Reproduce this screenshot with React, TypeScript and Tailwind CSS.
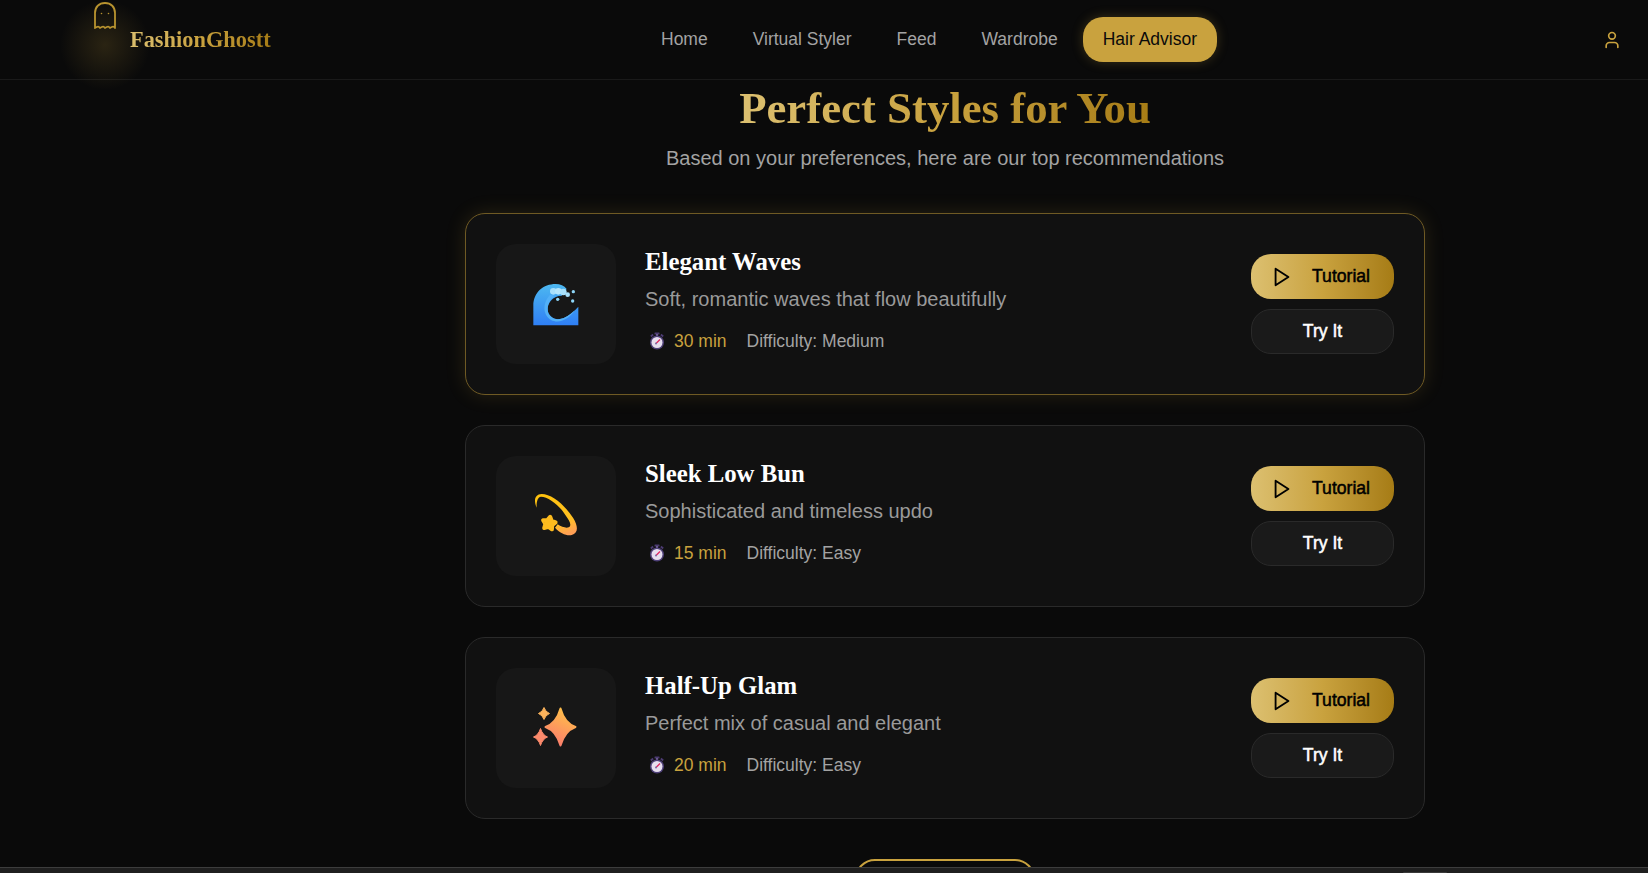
import React from "react";
import { User } from "lucide-react";

const serif = "font-['Liberation_Serif',serif]";

function Ghost() {
  return (
    <svg width="24" height="30" viewBox="0 0 24 30" fill="none" stroke="#b8932f" strokeWidth="1.8" strokeLinejoin="round" strokeLinecap="round">
      <path d="M2 27V12C2 6 6 2 12 2s10 4 10 10v15q-1.200-1.800-2.500-1.200T17 27q-1.300-1.800-2.500-1.200T12 27q-1.300-1.800-2.500-1.200T7 27q-1.300-1.800-2.500-1.200T2 27z" />
      <circle cx="8.500" cy="12.500" r="0.800" fill="#b8932f" stroke="none" />
      <circle cx="15.500" cy="12.500" r="0.800" fill="#b8932f" stroke="none" />
    </svg>
  );
}

function Wave() {
  return (
    <svg width="60" height="60" viewBox="3 0 180 180">
      <defs>
        <linearGradient id="wv" x1="0" y1="0" x2="0" y2="1">
          <stop offset="0" stopColor="#4db8f0" />
          <stop offset="1" stopColor="#2f7ff5" />
        </linearGradient>
      </defs>
      <path d="M25 154V95C25 55 55 30 92 30c13 0 26 5 33 15l-15 20c-25 0-42 20-42 40s17 33 37 30c20-3 40-20 55-37v56z" fill="url(#wv)" />
      <path d="M75 62C55 85 50 118 78 138c28 14 58-8 72-30-15 14-30 25-45 27-20 3-37-10-37-30 0-15 8-30 22-40z" fill="#52b0f7" />
      <circle cx="85" cy="52" r="10" fill="#a8e0fb" />
      <circle cx="100" cy="52" r="10" fill="#b5e6fc" />
      <circle cx="115" cy="54" r="10" fill="#a8e0fb" />
      <circle cx="128" cy="62" r="7" fill="#a8e0fb" />
      <circle cx="145" cy="53" r="5" fill="#8ed6f8" />
      <circle cx="143" cy="81" r="5" fill="#8ed6f8" />
      <circle cx="98" cy="76" r="5" fill="#8ed6f8" />
    </svg>
  );
}

function Dizzy() {
  return (
    <svg width="60" height="60" viewBox="3 3 180 180">
      <defs>
        <linearGradient id="dz" x1="0.300" y1="0" x2="0.700" y2="1">
          <stop offset="0" stopColor="#ffc20e" />
          <stop offset="0.700" stopColor="#ffc022" />
          <stop offset="1" stopColor="#ff9f55" />
        </linearGradient>
      </defs>
      <path d="M35 68C25 45 30 28 50 27c30 0 70 33 95 73 15 25 15 45-5 50-15 3-35-5-50-22l8-10c12 8 25 12 33 9 10-5 4-18-10-37C105 62 70 35 48 35c-10 1-14 15-13 33z" fill="url(#dz)" />
      <polygon points="75.500,95.300 79.900,107.400 91.800,112.200 81.700,120.200 80.800,133 70.100,125.800 57.600,128.900 61.100,116.500 54.300,105.600 67.200,105.100" fill="#fdbb1e" stroke="#fdbb1e" strokeWidth="12" strokeLinejoin="round" />
    </svg>
  );
}

function star(cx: number, cy: number, w: number, h: number, k: number) {
  return `M${cx} ${cy - h}Q${cx + k} ${cy - k} ${cx + w} ${cy}Q${cx + k} ${cy + k} ${cx} ${cy + h}Q${cx - k} ${cy + k} ${cx - w} ${cy}Q${cx - k} ${cy - k} ${cx} ${cy - h}z`;
}

function Sparkle() {
  return (
    <svg width="46" height="46" viewBox="0 0 46 46">
      <defs>
        <linearGradient id="sp" x1="0.700" y1="0" x2="0.300" y2="1">
          <stop offset="0" stopColor="#ffc247" />
          <stop offset="1" stopColor="#fb7a6e" />
        </linearGradient>
      </defs>
      <path d={star(27.500, 22, 15, 18.500, 4)} fill="url(#sp)" stroke="url(#sp)" strokeWidth="2" strokeLinejoin="round" />
      <path d={star(11, 8.500, 5.500, 6, 1.500)} fill="#fdb45c" stroke="#fdb45c" strokeWidth="1" strokeLinejoin="round" />
      <path d={star(7.500, 32, 7, 8.500, 2)} fill="#fb8a6c" stroke="#fb8a6c" strokeWidth="1" strokeLinejoin="round" />
    </svg>
  );
}

function Stopwatch() {
  return (
    <svg width="16" height="18" viewBox="0 0 16 18">
      <rect x="5.500" y="0.500" width="5" height="2" rx="0.500" fill="#4b3a70" />
      <rect x="7" y="2" width="2" height="2" fill="#6a5a90" />
      <rect x="1.500" y="2.500" width="3" height="2" transform="rotate(-40 3 3.500)" fill="#4b3a70" />
      <rect x="11.500" y="2.500" width="3" height="2" transform="rotate(40 13 3.500)" fill="#4b3a70" />
      <circle cx="8" cy="10.500" r="7" fill="#4f4178" />
      <circle cx="8" cy="10.500" r="5.500" fill="#e6deef" />
      <path d="M7 11.500l4-4" stroke="#e0245e" strokeWidth="1.300" />
      <circle cx="7" cy="11.500" r="1" fill="#7b6aa5" />
    </svg>
  );
}

function PlayIcon() {
  return (
    <svg width="22" height="22" viewBox="0 0 24 24" fill="none" stroke="currentColor" strokeWidth="2" strokeLinejoin="round" strokeLinecap="round" className="shrink-0">
      <polygon points="5 3 19 12 5 21 5 3" />
    </svg>
  );
}

type Style = { name: string; desc: string; time: string; diff: string; icon: React.ReactNode; active?: boolean };

const styles: Style[] = [
  { name: "Elegant Waves", desc: "Soft, romantic waves that flow beautifully", time: "30 min", diff: "Medium", icon: <Wave />, active: true },
  { name: "Sleek Low Bun", desc: "Sophisticated and timeless updo", time: "15 min", diff: "Easy", icon: <Dizzy /> },
  { name: "Half-Up Glam", desc: "Perfect mix of casual and elegant", time: "20 min", diff: "Easy", icon: <Sparkle /> },
];

function Card({ s }: { s: Style }) {
  return (
    <div
      className={
        "flex h-[182px] w-[960px] items-center rounded-[20px] border bg-[#111111] pr-[30px] pl-[30px] " +
        (s.active ? "border-[#6f5a24] shadow-[0_0_20px_rgba(201,162,62,0.16)]" : "border-[#2a2a2a]")
      }
    >
      <div className="flex h-[120px] w-[120px] shrink-0 items-center justify-center rounded-[20px] bg-[#171717]">{s.icon}</div>
      <div className="ml-[29px] flex min-w-0 flex-1 flex-col pb-[8px]">
        <div className={serif + " text-[24.800px] leading-[28px] font-bold text-white"}>{s.name}</div>
        <div className="mt-[9px] text-[20px] leading-[28px] text-[#9a9a9a]">{s.desc}</div>
        <div className="mt-[16px] flex h-[24px] items-center text-[17.500px] leading-[24px]">
          <span className="ml-[4px] flex w-[22px] items-center"><Stopwatch /></span>
          <span className="ml-[3px] text-[#c9a23e]">{s.time}</span>
          <span className="ml-[20px] text-[#a3a3a3]">Difficulty: {s.diff}</span>
        </div>
      </div>
      <div className="flex w-[143px] shrink-0 flex-col gap-[10px]">
        <button className="flex h-[45px] items-center rounded-[20px] bg-gradient-to-r from-[#dcc070] via-[#c9a23e] to-[#a67c15] pl-[20px] text-[17.600px] text-black [-webkit-text-stroke:0.500px_#000]">
          <PlayIcon />
          <span className="ml-[19px]">Tutorial</span>
        </button>
        <button className="flex h-[45px] items-center justify-center rounded-[20px] border border-[#2a2a2a] bg-[#1a1a1a] text-[17.600px] text-white [-webkit-text-stroke:0.500px_#fff]">
          Try It
        </button>
      </div>
    </div>
  );
}

export default function App() {
  return (
    <div className="flex h-[873px] flex-col overflow-hidden bg-[#0a0a0a] font-['Liberation_Sans',sans-serif]">
      <header className="relative flex h-[80px] shrink-0 items-center border-b border-[#1a1a1a] pr-[26px] pl-[93px]">
        <div className="flex w-[548px] shrink-0 items-center">
          <div className="relative -mt-[46px] h-[30px] w-[24px]">
            <div className="absolute top-[-1px] left-[-33px] h-[90px] w-[90px] bg-[radial-gradient(closest-side,rgba(201,162,62,0.17),rgba(201,162,62,0))]"></div>
            <div className="relative"><Ghost /></div>
          </div>
          <div className={serif + " ml-[13px] bg-gradient-to-r from-[#dcc070] via-[#c9a23e] to-[#a67c15] bg-clip-text text-[22.400px] font-bold text-transparent"}>
            FashionGhostt
          </div>
        </div>
        <nav className="flex items-center gap-[5px] text-[17.500px] text-[#a3a3a3]">
          <a className="px-[20px] py-[12px]">Home</a>
          <a className="px-[20px] py-[12px]">Virtual Styler</a>
          <a className="px-[20px] py-[12px]">Feed</a>
          <a className="px-[20px] py-[12px]">Wardrobe</a>
          <a className="flex h-[45px] items-center rounded-[20px] bg-[#c9a23e] px-[20px] text-[#0a0a0a] shadow-[0_0_12px_rgba(201,162,62,0.25)]">Hair Advisor</a>
        </nav>
        <div className="flex-1"></div>
        <User size={20} strokeWidth={2} className="text-[#c9a23e]" />
      </header>
      <main className="flex min-h-0 flex-1 flex-col items-center overflow-hidden pl-[242px]">
        <h1 className={serif + " shrink-0 bg-gradient-to-r from-[#dcc070] via-[#c9a23e] to-[#a67c15] bg-clip-text text-[44.800px] leading-[56px] font-bold text-transparent"}>
          Perfect Styles for You
        </h1>
        <p className="mt-[8px] shrink-0 text-[20px] leading-[28px] text-[#a3a3a3]">Based on your preferences, here are our top recommendations</p>
        <div className="mt-[41px] flex shrink-0 flex-col gap-[30px]">
          {styles.map((s) => (
            <Card key={s.name} s={s} />
          ))}
        </div>
        <div className="mt-[40px] h-[30px] w-[180px] shrink-0 rounded-t-[20px] border-2 border-[#c9a23e]"></div>
      </main>
      <div className="relative h-[6px] shrink-0 border-t border-[#3d3d3d] bg-[#1f1f1f]">
        <div className="absolute bottom-0 left-[1403px] h-[1px] w-[44px] rounded-t-sm bg-[#3a3a3a]"></div>
      </div>
    </div>
  );
}
